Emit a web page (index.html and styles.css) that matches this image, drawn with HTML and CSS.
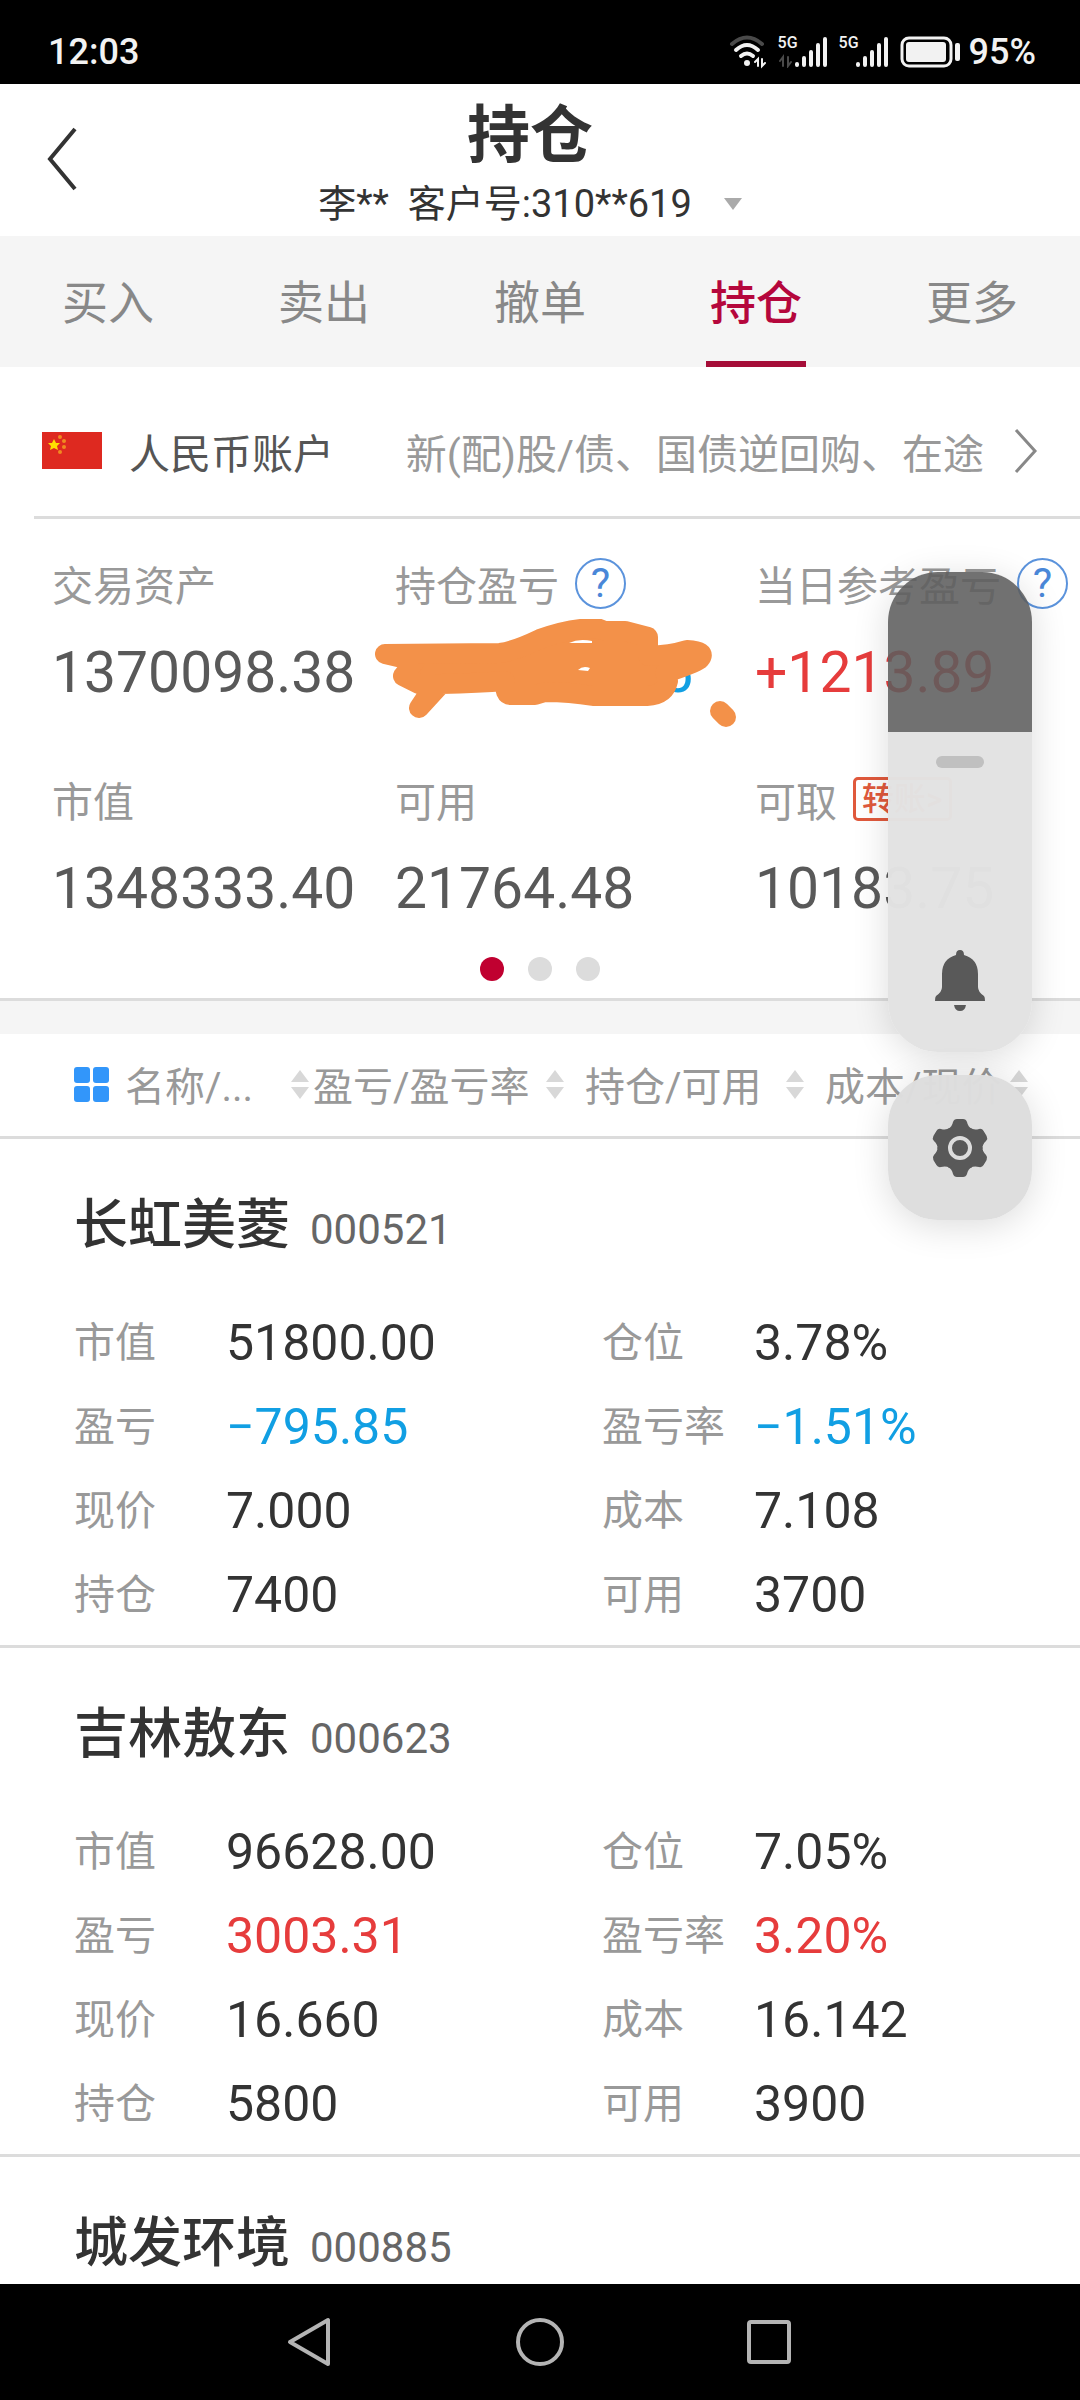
FILE: index.html
```html
<!DOCTYPE html>
<html lang="zh-CN">
<head>
  <meta charset="UTF-8" />
  <meta name="viewport" content="width=device-width, initial-scale=1.0" />
  <title>持仓</title>
  <link rel="stylesheet" href="styles.css">
</head>
<body>

  <div class="status-bar">
    <span class="clock">12:03</span>
    <div class="status-icons">
      <svg class="wifi" width="38" height="34" viewBox="0 0 38 34" fill="none" stroke-linecap="round">
        <path d="M3 9Q18 -4 33 9" stroke="#4a4a4a" stroke-width="4"/>
        <path d="M7 15Q18 5 29 15" stroke="#f2f2f2" stroke-width="4"/>
        <path d="M12 21Q18 16 24 21" stroke="#f2f2f2" stroke-width="4"/>
        <circle cx="18" cy="28" r="3" fill="#f2f2f2"/>
        <path d="M26 27L29 24V31M33 24V31L36 28" stroke="#f2f2f2" stroke-width="2"/>
      </svg>
      <div class="signal">
        <span class="net">5G</span>
        <svg width="50" height="32" viewBox="0 0 50 32" fill="none" stroke-linecap="round">
          <path d="M2 25L5 21V30M10 21V30L13 26" stroke="#4a4a4a" stroke-width="2"/>
          <path d="M19 28V29M26 22V29M33 16V29M40 9V29M47 3V29" stroke="#f2f2f2" stroke-width="4"/>
        </svg>
      </div>
      <div class="signal">
        <span class="net">5G</span>
        <svg width="50" height="32" viewBox="0 0 50 32" fill="none" stroke-linecap="round">
          <path d="M19 28V29M26 22V29M33 16V29M40 9V29M47 3V29" stroke="#f2f2f2" stroke-width="4"/>
        </svg>
      </div>
      <svg class="battery" width="60" height="32" viewBox="0 0 60 32">
        <rect x="2" y="2" width="49" height="28" rx="7" fill="none" stroke="#f2f2f2" stroke-width="3"/>
        <rect x="6" y="6" width="40" height="20" rx="3" fill="#f2f2f2"/>
        <rect x="55" y="7" width="5" height="18" rx="2" fill="#f2f2f2"/>
      </svg>
      <span class="percent">95%</span>
    </div>
  </div>

  <header class="header">
    <button class="back" aria-label="返回">
      <svg width="32" height="66" viewBox="0 0 32 66" fill="none" stroke="#333" stroke-width="4">
        <path d="M29 3L4 33L29 63"/>
      </svg>
    </button>
    <h1>持仓</h1>
    <button class="customer">李**&nbsp; 客户号:310**619 <span class="caret"></span></button>
  </header>

  <nav class="tabs">
    <a href="#">买入</a>
    <a href="#">卖出</a>
    <a href="#">撤单</a>
    <a href="#" class="active">持仓</a>
    <a href="#">更多</a>
  </nav>

  <main>
    <section class="account">
      <div class="account-row">
        <svg class="flag" width="60" height="37" viewBox="0 0 60 37">
          <rect width="60" height="37" fill="#de2920"/>
          <path d="M12 7L14 11L18 11L15 14L16 18L12 16L8 18L9 14L6 11L10 11Z" fill="#ffde00"/>
          <g fill="#f08a20">
            <circle cx="18" cy="5" r="2"/>
            <circle cx="22" cy="9" r="2"/>
            <circle cx="22" cy="15" r="2"/>
            <circle cx="18" cy="20" r="2"/>
          </g>
        </svg>
        <span class="account-name">人民币账户</span>
        <a href="#" class="account-link">
          新(配)股/债、国债逆回购、在途
          <svg width="24" height="46" viewBox="0 0 24 46" fill="none" stroke="#888" stroke-width="3">
            <path d="M2 2L21 23L2 44"/>
          </svg>
        </a>
      </div>

      <dl class="stats">
        <div>
          <dt>交易资产</dt>
          <dd>1370098.38</dd>
        </div>
        <div>
          <dt>持仓盈亏 <button class="help" aria-label="持仓盈亏说明">?</button></dt>
          <dd class="hidden-value down">5
            <svg class="scribble" width="362" height="110" viewBox="0 0 362 110" stroke="#f39149" stroke-width="20" stroke-linecap="round" stroke-linejoin="round">
              <path fill="#f39149" d="M10 35L125 34Q140 32 165 20Q195 9 222 9L230 12H250L273 18V37Q296 36 312 31Q332 32 325 40Q318 45 290 54L293 62Q290 76 272 77H218Q195 73 170 73L160 76H136Q129 76 130 62Q105 64 66 65L44 89L60 65H44L28 57L40 42L10 35Z"/>
              <path d="M345 92L351 98"/>
              <path d="M194 24Q204 19 217 22V24ZM203 51Q208 46 215 49L213 52Z" fill="#fff" stroke="none"/>
            </svg>
          </dd>
        </div>
        <div>
          <dt>当日参考盈亏 <button class="help" aria-label="当日参考盈亏说明">?</button></dt>
          <dd class="up">+1213.89</dd>
        </div>
        <div>
          <dt>市值</dt>
          <dd>1348333.40</dd>
        </div>
        <div>
          <dt>可用</dt>
          <dd>21764.48</dd>
        </div>
        <div>
          <dt>可取 <a href="#" class="transfer">转账&gt;</a></dt>
          <dd>10183.75</dd>
        </div>
      </dl>

      <div class="dots">
        <span class="dot current"></span>
        <span class="dot"></span>
        <span class="dot"></span>
      </div>
    </section>

    <div class="sort-bar">
      <button>
        <svg class="grid-icon" width="35" height="35" viewBox="0 0 35 35" fill="#3296fa">
          <rect width="16" height="16" rx="3"/>
          <rect x="19" width="16" height="16" rx="3"/>
          <rect y="19" width="16" height="16" rx="3"/>
          <rect x="19" y="19" width="16" height="16" rx="3"/>
        </svg>
        <span>名称/...</span>
        <i class="sort"></i>
      </button>
      <button><span>盈亏/盈亏率</span><i class="sort"></i></button>
      <button><span>持仓/可用</span><i class="sort"></i></button>
      <button><span>成本/现价</span><i class="sort"></i></button>
    </div>

    <article class="stock">
      <h2>长虹美菱 <small>000521</small></h2>
      <dl>
        <dt>市值</dt><dd>51800.00</dd>
        <dt>仓位</dt><dd>3.78%</dd>
        <dt>盈亏</dt><dd class="down">−795.85</dd>
        <dt>盈亏率</dt><dd class="down">−1.51%</dd>
        <dt>现价</dt><dd>7.000</dd>
        <dt>成本</dt><dd>7.108</dd>
        <dt>持仓</dt><dd>7400</dd>
        <dt>可用</dt><dd>3700</dd>
      </dl>
    </article>

    <article class="stock">
      <h2>吉林敖东 <small>000623</small></h2>
      <dl>
        <dt>市值</dt><dd>96628.00</dd>
        <dt>仓位</dt><dd>7.05%</dd>
        <dt>盈亏</dt><dd class="up">3003.31</dd>
        <dt>盈亏率</dt><dd class="up">3.20%</dd>
        <dt>现价</dt><dd>16.660</dd>
        <dt>成本</dt><dd>16.142</dd>
        <dt>持仓</dt><dd>5800</dd>
        <dt>可用</dt><dd>3900</dd>
      </dl>
    </article>

    <article class="stock">
      <h2>城发环境 <small>000885</small></h2>
    </article>
  </main>

  <!-- system volume panel, floats over the page -->
  <aside class="volume">
    <div class="volume-slider">
      <div class="volume-empty"></div>
      <div class="volume-fill">
        <span class="handle"></span>
        <svg width="50" height="62" viewBox="0 0 50 62" fill="#595959">
          <path d="M21 5Q21 0 25 0Q29 0 29 5Q43 9 43 24V37Q43 42 49 46Q50 47 50 51H0Q0 47 1 46Q7 42 7 37V24Q7 9 21 5Z"/>
          <path d="M19 55H31Q30 61 25 61Q20 61 19 55Z"/>
        </svg>
      </div>
    </div>
    <button class="volume-settings" aria-label="设置">
      <svg width="58" height="60" viewBox="-29 -30 58 60">
        <g fill="#595959">
          <circle r="22"/>
          <path id="tooth" d="M-12 -19Q-8 -21 -7 -26Q-6 -29 -3 -29H3Q6 -29 7 -26Q8 -21 12 -19L8 0H-8Z"/>
          <use href="#tooth" transform="rotate(60)"/>
          <use href="#tooth" transform="rotate(120)"/>
          <use href="#tooth" transform="rotate(180)"/>
          <use href="#tooth" transform="rotate(240)"/>
          <use href="#tooth" transform="rotate(300)"/>
        </g>
        <circle r="10" fill="none" stroke="#ddd" stroke-width="4"/>
      </svg>
    </button>
  </aside>

  <footer class="nav-bar">
    <button aria-label="返回">
      <svg width="48" height="50" viewBox="0 0 48 50" fill="none" stroke="#b4b4b4" stroke-width="4" stroke-linejoin="round">
        <path d="M42 3V47L4 25Z"/>
      </svg>
    </button>
    <button aria-label="主屏幕">
      <svg width="48" height="48" viewBox="0 0 48 48" fill="none" stroke="#b4b4b4" stroke-width="4">
        <circle cx="24" cy="24" r="22"/>
      </svg>
    </button>
    <button aria-label="最近任务">
      <svg width="48" height="48" viewBox="0 0 48 48" fill="none" stroke="#b4b4b4" stroke-width="4">
        <rect x="3" y="4" width="40" height="40" rx="2"/>
      </svg>
    </button>
  </footer>

</body>
</html>
```
FILE: styles.css
```css
* {
  box-sizing: border-box;
}

body {
  margin: 0;
  height: 100vh;
  display: flex;
  flex-direction: column;
  overflow: hidden;
  font-family: Roboto, "Noto Sans CJK SC", sans-serif;
  font-size: 41px;
  color: #333;
  background: #fff;
}

h1, h2, dl, dd {
  margin: 0;
}

button {
  padding: 0;
  border: none;
  background: none;
  font: inherit;
  color: inherit;
  cursor: pointer;
}

a {
  color: inherit;
  text-decoration: none;
}

svg {
  display: block;
  flex: none;
}

.up {
  color: #e63c3c;
}

.down {
  color: #119fe3;
}

/* status bar */
.status-bar {
  flex: none;
  display: flex;
  align-items: center;
  justify-content: space-between;
  height: 84px;
  padding: 20px 44px 0 48px;
  background: #000;
  color: #f2f2f2;
  font-size: 36px;
  font-weight: 500;
}

.status-icons {
  display: flex;
  align-items: center;
  gap: 11px;
}

.battery {
  margin-right: -2px;
}

.signal {
  position: relative;
}

.net {
  position: absolute;
  left: 0;
  top: -3px;
  font-size: 16px;
  line-height: 20px;
}

/* header */
.header {
  flex: none;
  position: relative;
  display: flex;
  flex-direction: column;
  align-items: center;
  height: 152px;
  padding: 12px 20px 0 0;
}

.header h1 {
  font-size: 63px;
  line-height: 80px;
  font-weight: 700;
}

.back {
  position: absolute;
  left: 46px;
  top: 42px;
}

.customer {
  display: flex;
  align-items: center;
  font-size: 38px;
  line-height: 56px;
}

.caret {
  margin-left: 32px;
  border: 9px solid transparent;
  border-top: 12px solid #aaa;
  border-bottom: none;
}

/* tabs */
.tabs {
  flex: none;
  display: flex;
  height: 131px;
  background: #f5f5f5;
  color: #888;
  font-size: 46px;
}

.tabs a {
  flex: 1;
  display: flex;
  flex-direction: column;
  align-items: center;
  line-height: 134px;
}

.tabs .active {
  color: #b5073c;
  font-weight: 500;
}

.tabs .active::after {
  content: "";
  width: 100px;
  height: 6px;
  margin-top: -9px;
  background: #a50d38;
}

main {
  flex: 1;
  min-height: 0;
  overflow: hidden;
}

/* account summary */
.account {
  border-bottom: 3px solid #dcdcdc;
}

.account-row {
  display: flex;
  align-items: center;
  height: 152px;
  margin-left: 34px;
  padding: 18px 42px 0 8px;
  border-bottom: 3px solid #dcdcdc;
  white-space: nowrap;
}

.account-name {
  margin-left: 27px;
  color: #555;
}

.account-link {
  display: flex;
  flex: 1;
  align-items: center;
  justify-content: flex-end;
  gap: 30px;
  color: #999;
}

.stats {
  display: grid;
  grid-template-columns: 343fr 360fr 325fr;
  row-gap: 54px;
  padding: 34px 0 0 52px;
}

.stats div {
  min-width: 0;
}

.stats dt {
  display: flex;
  align-items: center;
  gap: 16px;
  height: 60px;
  color: #999;
  white-space: nowrap;
}

.stats dd {
  margin-top: 18px;
  font-size: 57px;
  line-height: 84px;
}

.stats dd:not(.up):not(.down) {
  color: #595959;
}

.stats .hidden-value {
  position: relative;
  width: 298px;
  text-align: right;
}

.scribble {
  position: absolute;
  left: -20px;
  top: -12px;
}

.help {
  width: 51px;
  height: 51px;
  border: 2px solid #5b93dc;
  border-radius: 50%;
  color: #4a87d8;
  line-height: 47px;
}

.transfer {
  padding: 0 6px;
  border: 3px solid #e0593c;
  border-radius: 5px;
  color: #e0593c;
  font-size: 32px;
  line-height: 38px;
  font-weight: 500;
}

.dots {
  display: flex;
  justify-content: center;
  gap: 24px;
  padding: 26px 0 17px;
}

.dot {
  width: 24px;
  height: 24px;
  border-radius: 50%;
  background: #dcdcdc;
}

.dot.current {
  background: #c00030;
}

/* sort bar */
.sort-bar {
  display: grid;
  grid-template-columns: 239fr 272fr 240fr 203fr;
  height: 138px;
  padding: 0 52px 2px 74px;
  border-top: 33px solid #f5f5f5;
  border-bottom: 3px solid #dcdcdc;
  color: #999;
  font-size: 40px;
  white-space: nowrap;
}

.sort-bar button {
  display: flex;
  align-items: center;
  padding-right: 21px;
}

.sort-bar button:first-child {
  padding-right: 4px;
}

.sort-bar button:last-child {
  padding-right: 0;
}

.grid-icon {
  margin-right: 16px;
}

.sort {
  display: grid;
  gap: 5px;
  margin-left: auto;
}

.sort::before,
.sort::after {
  content: "";
  border: 9px solid transparent;
}

.sort::before {
  border-top: none;
  border-bottom: 12px solid #d8d8d8;
}

.sort::after {
  border-bottom: none;
  border-top: 12px solid #d8d8d8;
}

/* holdings */
.stock {
  padding: 47px 76px 8px 74px;
  border-bottom: 3px solid #dcdcdc;
}

.stock h2 {
  display: flex;
  align-items: baseline;
  gap: 20px;
  font-size: 54px;
  line-height: 80px;
  font-weight: 500;
}

.stock small {
  color: #666;
  font-size: 42px;
  font-weight: 400;
}

.stock dl {
  display: grid;
  grid-template-columns: 152fr 376fr 152fr 250fr;
  margin-top: 31px;
  line-height: 84px;
}

.stock dt {
  color: #999;
  white-space: nowrap;
}

.stock dd {
  font-size: 50px;
}

/* volume panel */
.volume {
  position: absolute;
  right: 48px;
  top: 572px;
  display: grid;
  gap: 23px;
  width: 144px;
}

.volume-slider,
.volume-settings {
  border-radius: 50px;
  overflow: hidden;
  box-shadow: 0 6px 36px rgba(0, 0, 0, 0.14);
}

.volume-empty {
  height: 160px;
  background: rgba(93, 93, 93, 0.88);
}

.volume-fill {
  display: flex;
  flex-direction: column;
  align-items: center;
  justify-content: space-between;
  height: 320px;
  padding: 24px 0 40px;
  background: rgba(226, 226, 226, 0.98);
}

.handle {
  width: 48px;
  height: 12px;
  border-radius: 6px;
  background: #c0c0c0;
}

.volume-settings {
  display: flex;
  align-items: center;
  justify-content: center;
  height: 145px;
  background: rgba(221, 221, 221, 0.98);
}

/* system navigation */
.nav-bar {
  flex: none;
  display: flex;
  align-items: center;
  justify-content: center;
  gap: 182px;
  height: 116px;
  background: #000;
}
```
